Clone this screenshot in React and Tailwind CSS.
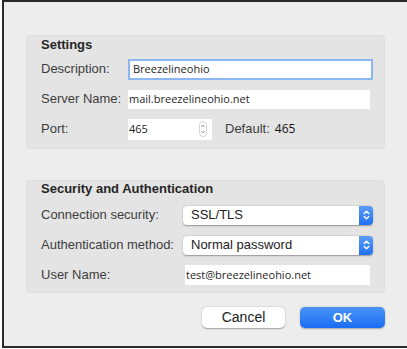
import React from "react";

const label = "font-['Liberation_Sans',Arial,sans-serif] text-[13px] text-[#3d3d3d]";
const value = "font-['Open_Sans',sans-serif] text-[11px] text-[#1f1f1f]";

function BlueArrows() {
  return (
    <div className="flex h-full w-[14px] items-center justify-center rounded-r-[4px] bg-gradient-to-b from-[#5a9cf8] to-[#1f6ff2]">
      <svg width="7" height="10" viewBox="0 0 7 10" fill="none" stroke="white" strokeWidth="1.4" strokeLinecap="round" strokeLinejoin="round">
        <path d="M1.2 3.6 L3.5 1.3 L5.8 3.6" />
        <path d="M1.2 6.4 L3.5 8.7 L5.8 6.4" />
      </svg>
    </div>
  );
}

function Select({ text }) {
  return (
    <div className="flex h-[19px] w-[190px] items-center rounded-[4px] bg-white shadow-[0_0.5px_1.5px_rgba(0,0,0,0.35)]">
      <span className="flex-1 pl-[8px] font-['Liberation_Sans',Arial,sans-serif] text-[13px] text-[#222]">{text}</span>
      <BlueArrows />
    </div>
  );
}

function Row({ name, width, children }) {
  return (
    <div className="flex h-[30px] items-center">
      <div className={`${label} ${width}`}>{name}</div>
      {children}
    </div>
  );
}

export default function App() {
  return (
    <div className="h-[349px] w-[407px] bg-white">
      <div className="ml-[2px] h-[348px] border-b-2 border-l-2 border-t-2 border-[#2a2a2a] bg-[#ededed] pl-[22px] pt-[33px]">
        <div className="w-[359px] rounded-[4px] border border-[#dedede] bg-[#e4e4e4] pb-[4px] pl-[14px] pt-[1px]">
          <div className="h-[16px] font-['Liberation_Sans',Arial,sans-serif] text-[13px] font-bold leading-[16px] text-[#262626]">
            Settings
          </div>
          <div className="h-[1px]" />
          <Row name="Description:" width="w-[87px]">
            <div className="flex h-[21px] w-[245px] items-center border-2 border-[#8cb8f2] bg-white pl-[3px]">
              <span className={value}>Breezelineohio</span>
            </div>
          </Row>
          <Row name="Server Name:" width="w-[87px]">
            <div className="flex h-[19px] w-[242px] items-center bg-white pl-[1px]">
              <span className={value}>mail.breezelineohio.net</span>
            </div>
          </Row>
          <Row name="Port:" width="w-[87px]">
            <div className="flex h-[21px] w-[84px] items-center bg-white pl-[1px]">
              <span className={`${value} flex-1`}>465</span>
              <svg width="8" height="16" viewBox="0 0 8 16" fill="none" stroke="#9a9a9a" strokeWidth="1" className="mr-[5px]">
                <rect x="0.5" y="0.5" width="7" height="15" rx="3.5" stroke="#d6d6d6" />
                <path d="M2.3 6 L4 4 L5.7 6" />
                <path d="M2.3 10 L4 12 L5.7 10" />
              </svg>
            </div>
            <span className={`${label} ml-[13px]`}>Default:</span>
            <span className="ml-[5px] font-['Open_Sans',sans-serif] text-[12px] text-[#111]">465</span>
          </Row>
        </div>

        <div className="mt-[31px] w-[359px] rounded-[4px] border border-[#dedede] bg-[#e4e4e4] pb-[2px] pl-[14px]">
          <div className="h-[16px] font-['Liberation_Sans',Arial,sans-serif] text-[13px] font-bold leading-[16px] text-[#262626]">
            Security and Authentication
          </div>
          <div className="h-[3px]" />
          <Row name="Connection security:" width="w-[142px]">
            <Select text="SSL/TLS" />
          </Row>
          <Row name="Authentication method:" width="w-[142px]">
            <Select text="Normal password" />
          </Row>
          <Row name="User Name:" width="w-[144px]">
            <div className="flex h-[20px] w-[185px] items-center bg-white pl-[1px]">
              <span className={value}>test@breezelineohio.net</span>
            </div>
          </Row>
        </div>

        <div className="mt-[14px] flex w-[359px] justify-end gap-[15px]">
          <button className="flex h-[21px] w-[83px] items-center justify-center rounded-[5px] bg-white font-['Liberation_Sans',Arial,sans-serif] text-[14px] text-[#222] shadow-[0_0.5px_1.5px_rgba(0,0,0,0.35)]">
            Cancel
          </button>
          <button className="flex h-[21px] w-[85px] items-center justify-center rounded-[5px] bg-gradient-to-b from-[#4a94f8] to-[#1a6cf3] font-['Liberation_Sans',Arial,sans-serif] text-[13px] font-bold text-white shadow-[0_0.5px_1.5px_rgba(0,0,0,0.3)]">
            OK
          </button>
        </div>
      </div>
    </div>
  );
}
